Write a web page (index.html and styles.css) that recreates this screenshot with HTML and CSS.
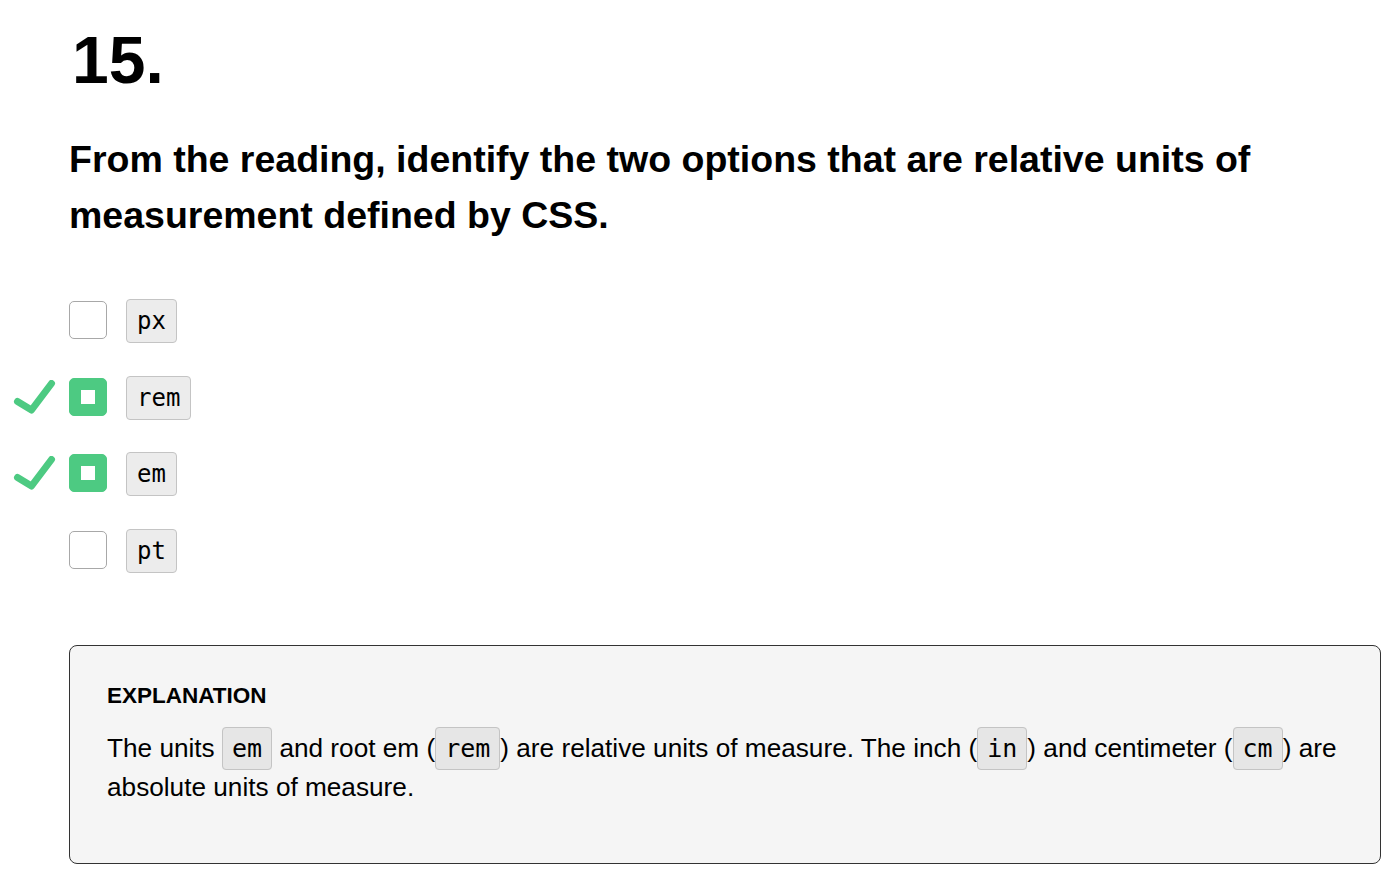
FILE: index.html
```html
<!DOCTYPE html>
<html lang="en">
<head>
<meta charset="utf-8">
<title>Question 15</title>
<link rel="stylesheet" href="styles.css">
</head>
<body>
<main class="quiz">
  <h1 class="number">15.</h1>
  <p class="question">From the reading, identify the two options that are relative units of measurement defined by CSS.</p>
  <ul class="options">
    <li class="option">
      <span class="box"></span>
      <code class="chip">px</code>
    </li>
    <li class="option correct">
      <svg class="mark" viewBox="0 0 44 36" width="44" height="36" aria-hidden="true"><path d="M4.5 21.5 L18.5 30 L38.5 3.5" fill="none" stroke="#4dca82" stroke-width="7" stroke-linecap="round" stroke-linejoin="round"/></svg>
      <span class="box checked"><span class="dot"></span></span>
      <code class="chip">rem</code>
    </li>
    <li class="option correct">
      <svg class="mark" viewBox="0 0 44 36" width="44" height="36" aria-hidden="true"><path d="M4.5 21.5 L18.5 30 L38.5 3.5" fill="none" stroke="#4dca82" stroke-width="7" stroke-linecap="round" stroke-linejoin="round"/></svg>
      <span class="box checked"><span class="dot"></span></span>
      <code class="chip">em</code>
    </li>
    <li class="option">
      <span class="box"></span>
      <code class="chip">pt</code>
    </li>
  </ul>
  <section class="explanation">
    <h2 class="exp-title">EXPLANATION</h2>
    <p class="exp-text">The units <code class="inline">em</code> and root em (<code class="inline">rem</code>) are relative units of measure. The inch (<code class="inline">in</code>) and centimeter (<code class="inline">cm</code>) are absolute units of measure.</p>
  </section>
</main>
</body>
</html>
```

FILE: styles.css
```css
html, body {
  margin: 0;
  padding: 0;
  background: #ffffff;
}

body {
  font-family: "Liberation Sans", Arial, sans-serif;
  color: #000;
}

.quiz {
  padding: 20px 14px 20px 69px;
}

.number {
  margin: 0 0 0 3px;
  font-size: 66px;
  line-height: 80px;
  font-weight: 700;
}

.question {
  margin: 31px 0 0 0;
  font-size: 37.5px;
  line-height: 56px;
  font-weight: 700;
}

.options {
  list-style: none;
  margin: 56px 0 0 0;
  padding: 0;
  display: flex;
  flex-direction: column;
  gap: 32.7px;
}

.option {
  position: relative;
  display: flex;
  align-items: center;
  gap: 19px;
  height: 44px;
}

.mark {
  position: absolute;
  left: -56px;
  top: 4px;
}

.box {
  box-sizing: border-box;
  width: 38px;
  height: 38px;
  border: 1px solid #a8a8a8;
  border-radius: 5px;
  background: #fff;
  display: flex;
  align-items: center;
  justify-content: center;
  margin-top: -2px;
}

.box.checked {
  background: #4dca82;
  border-color: #4dca82;
}

.dot {
  width: 14px;
  height: 14px;
  background: #fff;
}

.chip {
  box-sizing: border-box;
  height: 44px;
  display: inline-flex;
  align-items: center;
  padding: 0 10px;
  border: 1px solid #c4c4c4;
  border-radius: 4px;
  background: #ececec;
  font-family: "DejaVu Sans Mono", "Liberation Mono", monospace;
  font-size: 24px;
  color: #000;
}

.explanation {
  margin-top: 72px;
  border: 1px solid #333;
  border-radius: 8px;
  background: #f5f5f5;
  padding: 37px;
}

.exp-title {
  margin: 0;
  font-size: 22.5px;
  line-height: 26px;
  font-weight: 700;
}

.exp-text {
  margin: 20px 0 19px 0;
  font-size: 26.2px;
  line-height: 39px;
}

.inline {
  font-family: "DejaVu Sans Mono", "Liberation Mono", monospace;
  font-size: 25px;
  padding: 6px 9px;
  border: 1px solid #c4c4c4;
  border-radius: 4px;
  background: #e6e6e6;
}
```
